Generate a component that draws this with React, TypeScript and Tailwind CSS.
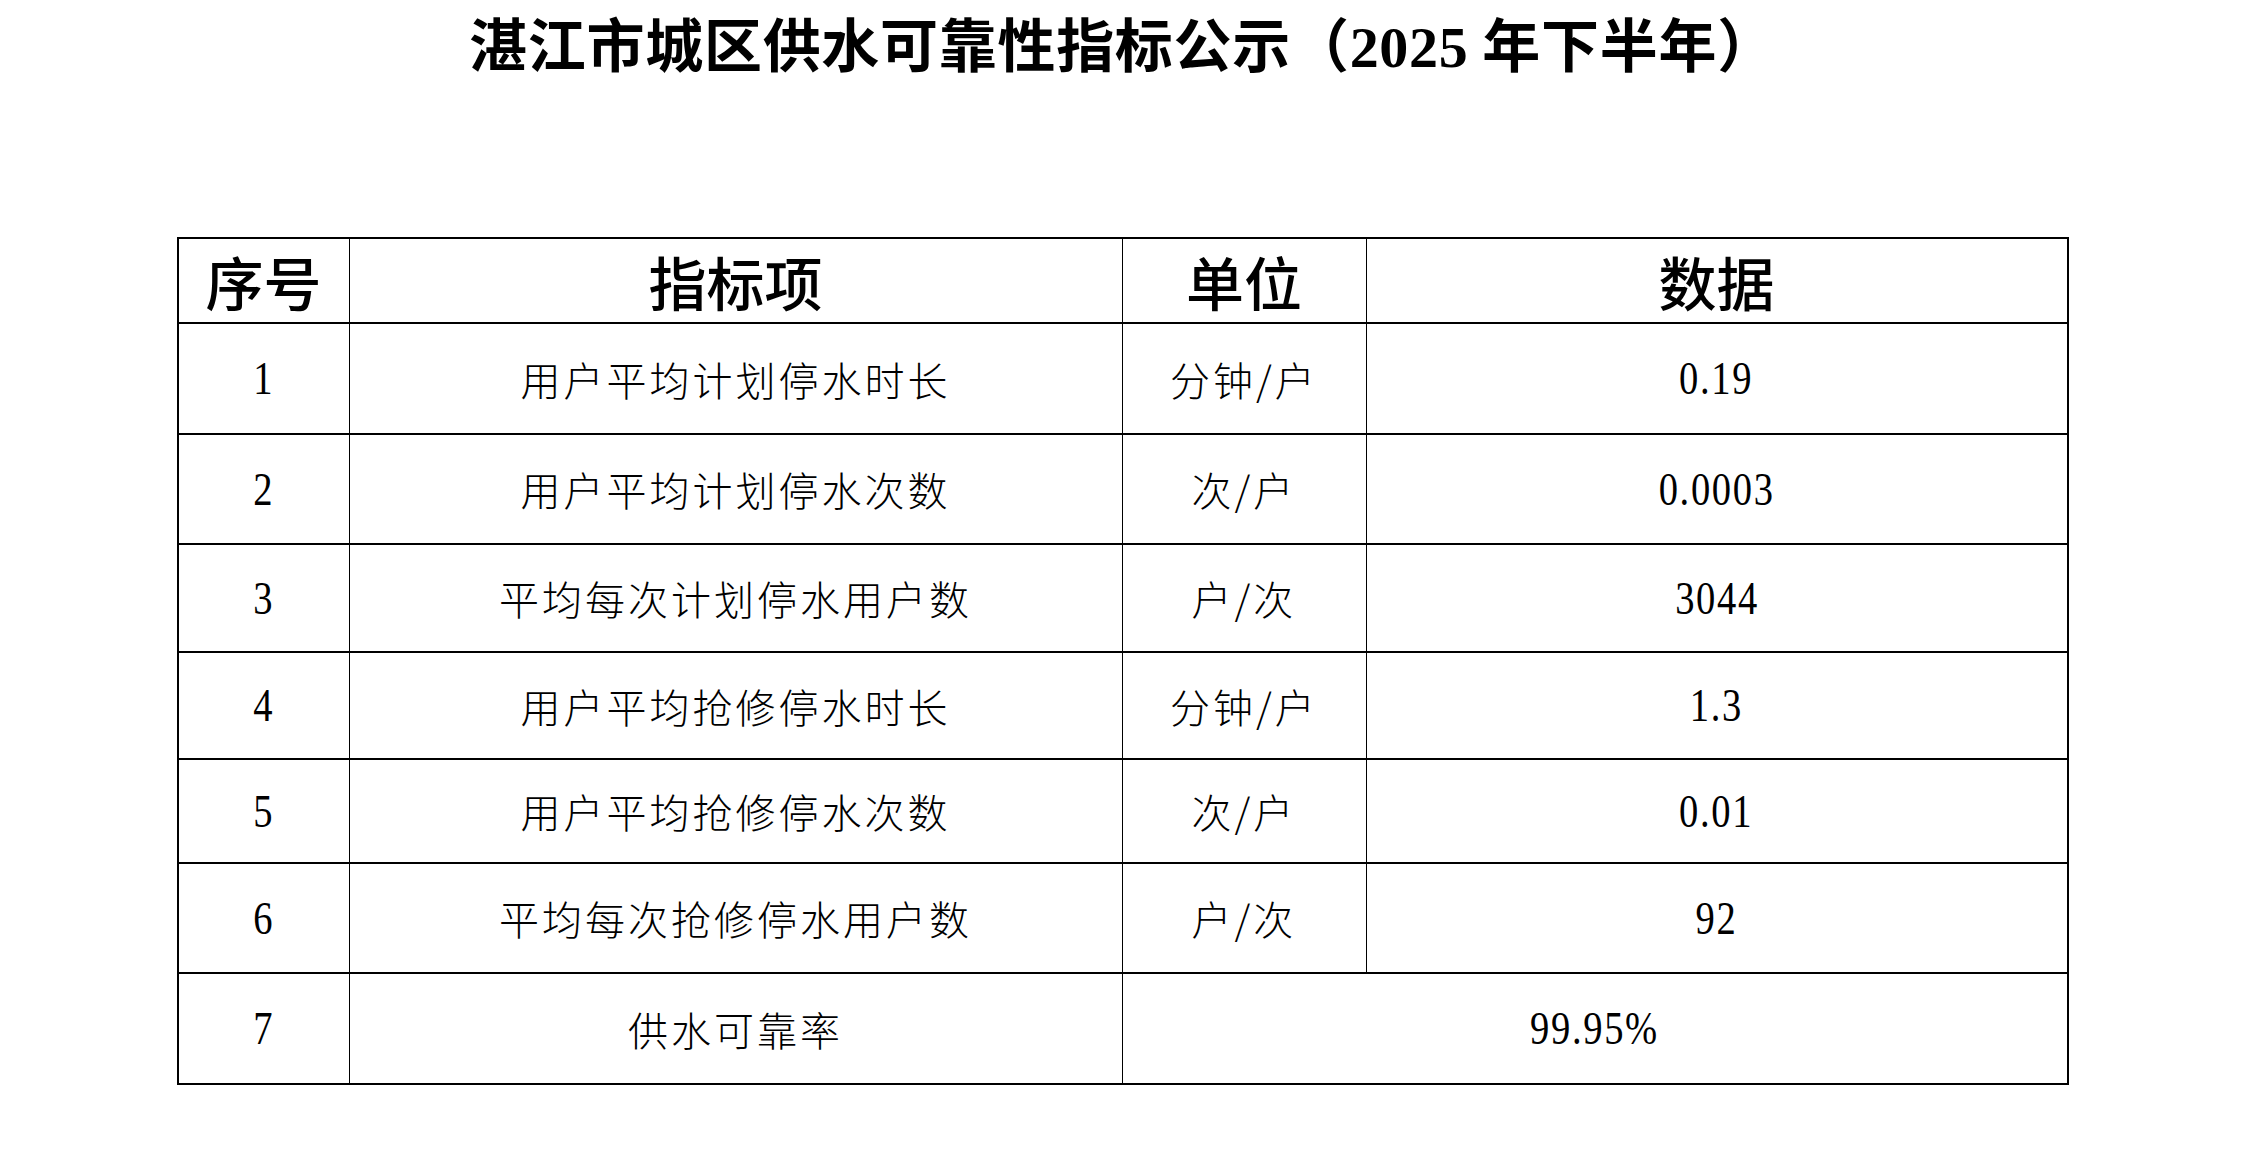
const ROWS = [
  { no: '1', item: '用户平均计划停水时长', unit: '分钟/户', value: '0.19', h: 'h-[111px]' },
  { no: '2', item: '用户平均计划停水次数', unit: '次/户', value: '0.0003', h: 'h-[110px]' },
  { no: '3', item: '平均每次计划停水用户数', unit: '户/次', value: '3044', h: 'h-[108px]' },
  { no: '4', item: '用户平均抢修停水时长', unit: '分钟/户', value: '1.3', h: 'h-[107px]' },
  { no: '5', item: '用户平均抢修停水次数', unit: '次/户', value: '0.01', h: 'h-[104px]' },
  { no: '6', item: '平均每次抢修停水用户数', unit: '户/次', value: '92', h: 'h-[110px]' },
];

const cjk = "font-['Noto_Sans_CJK_SC',sans-serif]";

function Num({ children }: { children: string }) {
  return (
    <span className="inline-block font-['Liberation_Serif','Noto_Sans_CJK_SC',serif] text-[47px] leading-none tracking-[2px] scale-x-[0.82] font-normal">
      {children}
    </span>
  );
}

function Body({ children }: { children: string }) {
  return <span className={`${cjk} text-[40px] leading-none tracking-[3px] font-light`}>{children}</span>;
}

export default function App() {
  return (
    <div className="w-full h-[1161px] bg-white text-black overflow-hidden">
      {/* Title */}
      <div className="pt-[13px] h-[70px] flex justify-center">
        <h1 className={`${cjk} text-[58px] leading-[58px] tracking-[0.7px] font-bold whitespace-nowrap`}>
          湛江市城区供水可靠性指标公示（
          <span className="font-['Liberation_Serif',serif] font-bold">2025</span> 年下半年）
        </h1>
      </div>

      {/* Table */}
      <div className="mt-[167px] mx-auto w-[1892px] border-l-2 border-t-2 border-black grid grid-cols-[171px_773px_244px_702px]">
        {/* header */}
        {['序号', '指标项', '单位', '数据'].map((t, i) => (
          <div
            key={t}
            className={`h-[85px] flex items-center justify-center border-b-2 border-black ${i === 3 ? 'border-r-2' : 'border-r'}`}
          >
            <span className={`${cjk} text-[58px] leading-none font-medium`}>{t}</span>
          </div>
        ))}

        {ROWS.map((r) => (
          <div key={r.no} className="contents">
            <div className={`${r.h} flex items-center justify-center border-r border-b-2 border-black`}>
              <Num>{r.no}</Num>
            </div>
            <div className={`${r.h} flex items-center justify-center border-r border-b-2 border-black`}>
              <Body>{r.item}</Body>
            </div>
            <div className={`${r.h} flex items-center justify-center border-r border-b-2 border-black`}>
              <Body>{r.unit}</Body>
            </div>
            <div className={`${r.h} flex items-center justify-center border-r-2 border-b-2 border-black`}>
              <Num>{r.value}</Num>
            </div>
          </div>
        ))}

        {/* last row */}
        <div className="h-[111px] flex items-center justify-center border-r border-b-2 border-black">
          <Num>7</Num>
        </div>
        <div className="h-[111px] flex items-center justify-center border-r border-b-2 border-black">
          <Body>供水可靠率</Body>
        </div>
        <div className="col-span-2 h-[111px] flex items-center justify-center border-r-2 border-b-2 border-black">
          <Num>99.95%</Num>
        </div>
      </div>
    </div>
  );
}
